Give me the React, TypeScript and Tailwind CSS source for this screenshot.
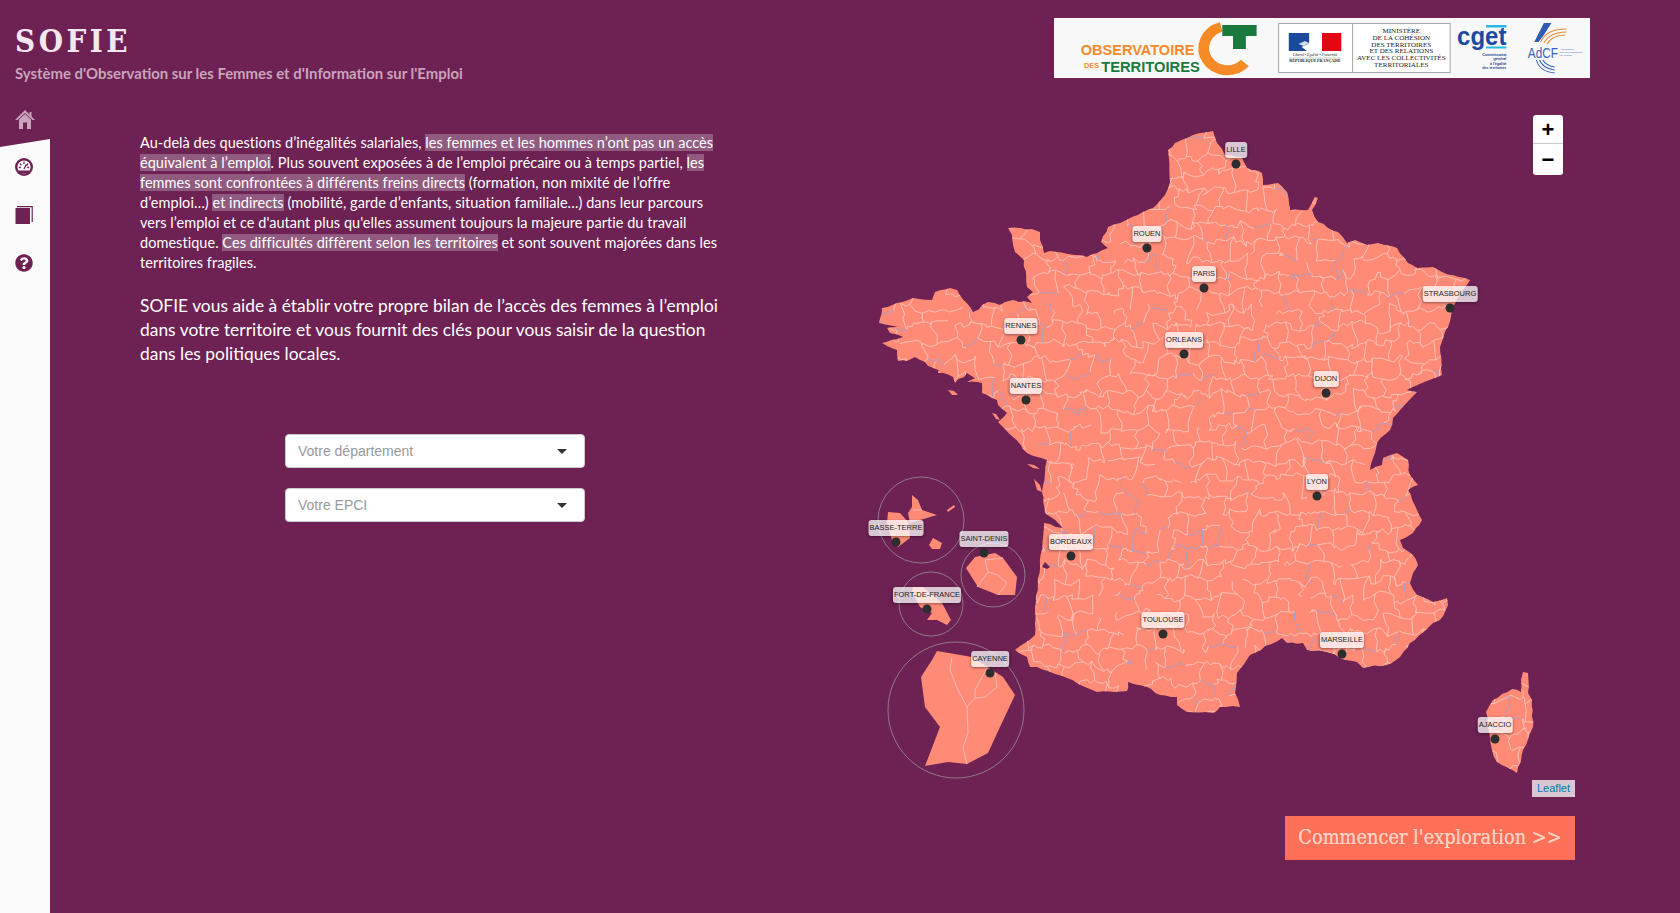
import { FaQuestionCircle } from "react-icons/fa";

const franceCoast =
  "1213,131 1193,135 1175,143 1168,150 1170,182 1165,195 1153,208 1132,217 1108,227 1101,242 1108,248 1087,257 1068,254 1050,251 1044,253 1040,240 1040,232 1032,229 1008,228 1012,235 1015,252 1024,260 1027,287 1033,292 1027,297 1032,303 1013,300 1005,302 1000,305 988,302 973,312 957,290 950,288 935,292 932,300 913,298 897,303 882,308 879,323 898,327 887,328 890,333 903,337 882,343 897,350 898,361 907,361 915,357 933,368 953,377 955,383 967,373 975,378 967,382 982,383 982,393 997,400 998,405 1007,413 998,422 1013,437 1027,453 1047,460 1042,492 1045,513 1063,528 1050,524 1044,523 1040,567 1035,607 1035,635 1015,650 1027,657 1030,667 1037,667 1067,678 1097,692 1127,691 1128,682 1147,687 1160,695 1177,697 1177,705 1187,712 1213,713 1220,707 1240,707 1235,693 1237,673 1250,655 1282,638 1287,643 1303,643 1307,650 1327,652 1340,658 1357,662 1363,668 1387,665 1400,657 1410,643 1433,623 1440,620 1448,605 1447,598 1433,602 1417,595 1410,583 1413,573 1418,565 1413,555 1403,548 1400,540 1413,533 1422,520 1417,510 1408,490 1418,485 1410,475 1408,460 1397,453 1383,458 1382,465 1370,470 1375,453 1377,443 1390,430 1393,418 1417,392 1407,390 1442,375 1440,347 1448,327 1452,308 1470,280 1442,272 1433,267 1417,268 1408,263 1397,248 1378,243 1367,245 1355,240 1347,243 1338,232 1318,222 1312,210 1318,198 1315,197 1308,210 1290,210 1287,192 1278,183 1263,185 1262,173 1247,168 1242,157 1225,155 1217,143";
const corsicaCoast =
  "1523,672 1528,673 1528,693 1532,700 1533,727 1523,750 1517,773 1497,762 1492,750 1490,737 1486,712 1493,700 1512,689 1521,692 1521,680";
const islands = [
  "1027,464 1034,465 1040,469 1033,468",
  "1034,479 1040,485 1042,492 1037,490",
  "948,390 954,391 958,395 952,395",
  "992,413 996,414 1000,420 996,419",
  "938,371 941,371 942,373 938,373",
];
const overseas = [
  "937,651 972,657 1003,677 1015,695 1000,727 988,753 967,764 948,762 925,766 940,727 925,707 921,677 932,660",
  "975,557 995,553 1003,558 1017,577 1015,595 998,595 978,587 966,568",
  "913,587 923,587 942,603 951,620 947,625 937,620 927,620 932,613 920,607 912,592",
  "912,495 918,500 922,510 937,515 910,523 908,513 912,507",
  "888,512 900,513 909,523 910,538 898,547 892,540 887,523",
  "933,538 942,543 940,549 932,549 929,545",
  "947,510 954,505 955,507 948,512",
];
const overseasBorders =
  "M952 657L950 670L958 690L967 707L968 733L963 747L967 764M967 707L975 698L975 690L987 668M975 698L985 697L997 687L995 673M985 560L988 572L977 587M985 560L1003 558M988 572L998 575L1007 583L998 595M913 510L922 510";

const circles = [
  { x: 921, y: 520, r: 43 },
  { x: 993, y: 575, r: 32 },
  { x: 931, y: 604, r: 32 },
  { x: 956, y: 710, r: 68 },
];

const cities = [
  { name: "LILLE", x: 1236, y: 164 },
  { name: "ROUEN", x: 1147, y: 248 },
  { name: "PARIS", x: 1204, y: 288 },
  { name: "RENNES", x: 1021, y: 340 },
  { name: "NANTES", x: 1026, y: 400 },
  { name: "ORLEANS", x: 1184, y: 354 },
  { name: "STRASBOURG", x: 1450, y: 308 },
  { name: "DIJON", x: 1326, y: 393 },
  { name: "LYON", x: 1317, y: 496 },
  { name: "MARSEILLE", x: 1342, y: 654 },
  { name: "TOULOUSE", x: 1163, y: 634 },
  { name: "BORDEAUX", x: 1071, y: 556 },
  { name: "BASSE-TERRE", x: 896, y: 542 },
  { name: "SAINT-DENIS", x: 984, y: 553 },
  { name: "FORT-DE-FRANCE", x: 927, y: 609 },
  { name: "CAYENNE", x: 990, y: 673 },
  { name: "AJACCIO", x: 1495, y: 739 },
];

let seed = 73421;
const rand = () => {
  seed = (seed * 1664525 + 1013904223) % 4294967296;
  return seed / 4294967296;
};

// break long coast segments up so the outline isn't so straight
function roughen(points: string) {
  const pts = points.split(" ").map((p) => p.split(",").map(Number));
  const out: string[] = [];
  pts.forEach((a, i) => {
    const b = pts[(i + 1) % pts.length];
    const steps = Math.max(1, Math.round(Math.hypot(b[0] - a[0], b[1] - a[1]) / 6));
    for (let s = 0; s < steps; s++) {
      const j = s === 0 ? 0 : 1.8;
      const x = a[0] + ((b[0] - a[0]) * s) / steps + (rand() - 0.5) * j;
      const y = a[1] + ((b[1] - a[1]) * s) / steps + (rand() - 0.5) * j;
      out.push(`${x.toFixed(1)},${y.toFixed(1)}`);
    }
  });
  return out.join(" ");
}
const franceOutline = roughen(franceCoast);
const corsicaOutline = roughen(corsicaCoast);

// fake EPCI borders: a jittered brick lattice, clipped to the land
function buildBorders() {
  const rows = 40;
  const cols = 62;
  const pts: [number, number][][] = [];
  for (let r = 0; r < rows; r++) {
    const row: [number, number][] = [];
    for (let c = 0; c < cols; c++) {
      row.push([870 + c * 11 + (rand() - 0.5) * 10, 122 + r * 17 + (rand() - 0.5) * 11]);
    }
    pts.push(row);
  }
  let light = "";
  let blue = "";
  const edge = (a: [number, number], b: [number, number]) => {
    if (rand() < 0.12) return;
    const p1 = [a[0] + (b[0] - a[0]) / 3 + (rand() - 0.5) * 6, a[1] + (b[1] - a[1]) / 3 + (rand() - 0.5) * 6];
    const p2 = [a[0] + ((b[0] - a[0]) * 2) / 3 + (rand() - 0.5) * 6, a[1] + ((b[1] - a[1]) * 2) / 3 + (rand() - 0.5) * 6];
    const d = `M${a[0].toFixed(1)} ${a[1].toFixed(1)}L${p1[0].toFixed(1)} ${p1[1].toFixed(1)}L${p2[0].toFixed(1)} ${p2[1].toFixed(1)}L${b[0].toFixed(1)} ${b[1].toFixed(1)}`;
    if (rand() < 0.1) blue += d;
    else light += d;
  };
  for (let r = 0; r < rows; r++) {
    for (let c = 0; c < cols; c++) {
      if (c + 1 < cols) edge(pts[r][c], pts[r][c + 1]);
      if (r + 1 < rows && (c + r) % 2 === 0) edge(pts[r][c], pts[r + 1][c]);
    }
  }
  return { light, blue };
}
const borders = buildBorders();

function LogoBanner() {
  return (
    <svg viewBox="0 0 500 60" preserveAspectRatio="none" className="block h-[60px] w-[536px] bg-[#f8f8f8]">
      <g fontFamily="'Liberation Sans', sans-serif" fontWeight="700">
        <text x="25" y="37" fontSize="15.5" fill="#f58a27" textLength="106" lengthAdjust="spacingAndGlyphs">OBSERVATOIRE</text>
        <text x="28" y="50" fontSize="8" fill="#f58a27" textLength="14" lengthAdjust="spacingAndGlyphs">DES</text>
        <text x="44" y="54" fontSize="15.5" fill="#1a7a3e" textLength="92" lengthAdjust="spacingAndGlyphs">TERRITOIRES</text>
      </g>
      <path d="M156 9A22 22 0 1 0 178 45" fill="none" stroke="#f58a27" strokeWidth="10" />
      <path d="M157 7H189V18H179V31H167V18H157Z" fill="#1a7a3e" />

      <rect x="209.5" y="5.5" width="160" height="49" fill="#fff" stroke="#aaa" />
      <path d="M278.5 5.5V54.5" stroke="#aaa" />
      <rect x="219" y="15" width="49" height="18" fill="#fff" />
      <rect x="219" y="15" width="19" height="18" fill="#1b4a9c" />
      <rect x="250" y="15" width="18" height="18" fill="#e30613" />
      <path d="M243 15L248 16L250 22L249 28L244 33H236L231 29L237 26L241 21Z" fill="#fff" />
      <path d="M228 26L234 23L238 25L233 28Z" fill="#fff" opacity="0.8" />
      <g fontFamily="'Liberation Serif', serif" textAnchor="middle" fill="#222">
        <text x="243.5" y="38" fontSize="3.6" fontStyle="italic">Liberté • Égalité • Fraternité</text>
        <text x="243.5" y="44.5" fontSize="3.8" fontWeight="700">RÉPUBLIQUE FRANÇAISE</text>
        <text x="324" y="15" fontSize="6.6">MINISTÈRE</text>
        <text x="324" y="22" fontSize="6.6">DE LA COHÉSION</text>
        <text x="324" y="28.7" fontSize="6.6">DES TERRITOIRES</text>
        <text x="324" y="35.3" fontSize="6.6">ET DES RELATIONS</text>
        <text x="324" y="42" fontSize="6.6">AVEC LES COLLECTIVITÉS</text>
        <text x="324" y="49.3" fontSize="6.6">TERRITORIALES</text>
      </g>
      <path d="M219 40H268" stroke="#999" strokeWidth="0.5" />

      <rect x="403" y="7" width="19" height="2.5" fill="#28b8e8" />
      <rect x="403" y="28.5" width="19" height="2" fill="#28b8e8" />
      <text x="376" y="27" fontFamily="'Liberation Sans', sans-serif" fontWeight="700" fontSize="25" fill="#1b4aa0" textLength="46" lengthAdjust="spacingAndGlyphs">cget</text>
      <g fontFamily="'Liberation Sans', sans-serif" fontWeight="700" fontSize="3.4" fill="#1b3d8f" textAnchor="end">
        <text x="422" y="38">Commissariat</text>
        <text x="422" y="42.5">général</text>
        <text x="422" y="47">à l'égalité</text>
        <text x="422" y="51.5">des territoires</text>
      </g>

      <path d="M457 5H464L457 17L452 24H448Z" fill="#2f5cb0" />
      <g fill="none" strokeWidth="1">
        <path d="M454 24C458 14 468 11 478 11" stroke="#ee8a3c" />
        <path d="M457 25C461 17 469 14 478 14" stroke="#ee8a3c" />
        <path d="M460 26C463 20 470 17 477 17" stroke="#ee8a3c" />
        <path d="M450 42C452 50 458 54 467 55" stroke="#3a63b8" />
        <path d="M453 42C455 48 460 51 467 52" stroke="#3a63b8" />
        <path d="M456 42C458 46 462 48 467 49" stroke="#3a63b8" />
      </g>
      <text x="442" y="40" fontFamily="'Liberation Sans', sans-serif" fontSize="14" fill="#3a63b8" textLength="28" lengthAdjust="spacingAndGlyphs">AdCF</text>
      <g fontFamily="'Liberation Sans', sans-serif" fontSize="2.5" fill="#3a63b8">
        <text x="472" y="32">Association</text>
        <text x="472" y="35">des Communautés</text>
        <text x="472" y="38">de France</text>
      </g>
    </svg>
  );
}

function FranceMap() {
  return (
    <div className="relative h-[697px] w-[720px]">
      <svg viewBox="855 100 720 697" className="block h-full w-full">
        <defs>
          <clipPath id="land">
            <polygon points={franceOutline} />
            <polygon points={corsicaOutline} />
          </clipPath>
        </defs>
        <polygon points={franceOutline} fill="#ff8b77" />
        <polygon points={corsicaOutline} fill="#ff8b77" />
        {islands.map((p) => (
          <polygon key={p} points={p} fill="#ff8b77" />
        ))}
        {overseas.map((p) => (
          <polygon key={p} points={p} fill="#ff8b77" />
        ))}
        <g clipPath="url(#land)" fill="none">
          <path d={borders.light} stroke="#fdc0b4" strokeWidth="1" />
          <path d={borders.blue} stroke="#ab9cc6" strokeWidth="1" />
        </g>
        {/* bassin d'Arcachon */}
        <polygon points="1042,567 1045,562 1050,567 1047,569" fill="#6e2153" />
        <path d={overseasBorders} fill="none" stroke="#f3b8b4" strokeWidth="1" />
        {circles.map((c) => (
          <circle key={c.x} cx={c.x} cy={c.y} r={c.r} fill="none" stroke="#8f7b88" strokeWidth="1" />
        ))}
        {cities.map((c) => (
          <circle key={c.name} cx={c.x} cy={c.y} r="4.5" fill="#2e2e2e" />
        ))}
      </svg>

      {cities.map((c) => (
        <div
          key={c.name}
          className="absolute -translate-x-1/2 rounded-[3px] bg-white/75 px-px font-['Liberation_Sans',sans-serif] text-[7.5px] leading-[16px] whitespace-nowrap text-[#222] shadow-[0_1px_3px_rgba(0,0,0,0.4)]"
          style={{ left: c.x - 855, top: c.y - 100 - 22 }}
        >
          {c.name}
        </div>
      ))}

      {/* zoom control */}
      <div className="absolute top-[15px] right-[12px] flex w-[30px] flex-col rounded-[3px] bg-white font-['Liberation_Sans',sans-serif] text-[22px] font-bold text-black">
        <div className="flex h-[29px] items-center justify-center border-b border-[#ccc]">+</div>
        <div className="flex h-[31px] items-center justify-center">−</div>
      </div>

      <div className="absolute right-0 bottom-0 flex h-[17px] w-[43px] items-center justify-center bg-white/75 font-['Liberation_Sans',sans-serif] text-[11px] text-[#0078a8]">
        Leaflet
      </div>
    </div>
  );
}

function Highlight({ children }: { children: string }) {
  return <span className="bg-[#905b7e] [box-decoration-break:clone]">{children}</span>;
}

function Select({ label }: { label: string }) {
  return (
    <div className="flex h-[34px] w-[300px] items-center justify-between rounded-[4px] border border-[#ccc] bg-white pr-[17px] pl-[12px] font-['Liberation_Sans',sans-serif] text-[14px] text-[#999]">
      {label}
      <span className="h-0 w-0 border-x-[5px] border-t-[5px] border-x-transparent border-t-[#333]" />
    </div>
  );
}

export default function App() {
  return (
    <div className="flex h-screen flex-col overflow-hidden bg-[#6e2153] font-['Lato',sans-serif]">
      {/* Header */}
      <header className="flex h-[100px] shrink-0 justify-between">
        <div className="pt-[21px] pl-[15px]">
          <h1 className="font-['DejaVu_Serif_Condensed','DejaVu_Serif',serif] text-[31px] leading-[40px] font-bold tracking-[3.5px] text-[#f3e8f0]">SOFIE</h1>
          <p className="mt-[2px] text-[14.9px] leading-[20px] font-bold text-[#c9a4bd]">
            Système d'Observation sur les Femmes et d'Information sur l'Emploi
          </p>
        </div>
        <div className="mt-[18px] mr-[90px]">
          <LogoBanner />
        </div>
      </header>

      <div className="flex flex-1">
        {/* Sidebar */}
        <nav className="flex w-[50px] shrink-0 flex-col">
          <div className="flex h-[39px] items-center justify-center">
            <svg viewBox="0 0 20 19" className="h-[19px] w-[20px]" fill="#c9a4bd">
              <path d="M10 0L20 10H17.5L10 3L2.5 10H0Z" />
              <path d="M4 9.5L10 4L16 9.5V19H12V12.5H8V19H4Z" />
              <rect x="14.5" y="2" width="2" height="5" />
            </svg>
          </div>
          <div className="flex flex-1 flex-col bg-[#fafafa] pt-[4px] [clip-path:polygon(0_8px,100%_0,100%_100%,0_100%)]">
            <div className="flex h-[48px] items-center justify-center pr-[2px]">
              <svg viewBox="0 0 18 18" className="h-[18px] w-[18px]">
                <circle cx="9" cy="9" r="9" fill="#6e2153" />
                <circle cx="9" cy="9" r="6.6" fill="#fff" />
                <path d="M3 12.5H15L13 15.5H5Z" fill="#6e2153" />
                <path d="M9 3.5V6M5 5.5L6.3 7.3M13 5.5L11.7 7.3M9 11L11.3 6.5M3.8 9.5H5.8M12.2 9.5H14.2" stroke="#6e2153" strokeWidth="1.3" fill="none" />
              </svg>
            </div>
            <div className="flex h-[48px] items-center justify-center pr-[2px]">
              <svg viewBox="0 0 18 18" className="h-[18px] w-[18px]">
                <rect x="0.5" y="2" width="14.5" height="16" fill="#6e2153" />
                <path d="M2 0.7H17.2V16" fill="none" stroke="#6e2153" strokeWidth="1.2" />
              </svg>
            </div>
            <div className="flex h-[48px] items-center justify-center pr-[2px]">
              <FaQuestionCircle className="h-[18px] w-[18px] text-[#6e2153]" />
            </div>
          </div>
        </nav>

        {/* Intro */}
        <main className="ml-[90px] w-[600px] pt-[33px] text-white">
          <p className="text-[14.5px] leading-[20px] tracking-[0.04px] whitespace-nowrap">
            Au-delà des questions d’inégalités salariales, <Highlight>les femmes et les hommes n’ont pas un accès</Highlight>
            <br />
            <Highlight>équivalent à l’emploi</Highlight>. Plus souvent exposées à de l’emploi précaire ou à temps partiel, <Highlight>les</Highlight>
            <br />
            <Highlight>femmes sont confrontées à différents freins directs</Highlight> (formation, non mixité de l’offre
            <br />
            d’emploi…) <Highlight>et indirects</Highlight> (mobilité, garde d’enfants, situation familiale…) dans leur parcours
            <br />
            vers l’emploi et ce d'autant plus qu'elles assument toujours la majeure partie du travail
            <br />
            domestique. <Highlight>Ces difficultés diffèrent selon les territoires</Highlight> et sont souvent majorées dans les
            <br />
            territoires fragiles.
          </p>
          <p className="mt-[21px] text-[17.4px] leading-[24px] whitespace-nowrap">
            SOFIE vous aide à établir votre propre bilan de l’accès des femmes à l’emploi
            <br />
            dans votre territoire et vous fournit des clés pour vous saisir de la question
            <br />
            dans les politiques locales.
          </p>
          <div className="mt-[68px] ml-[145px] flex flex-col gap-[20px]">
            <Select label="Votre département" />
            <Select label="Votre EPCI" />
          </div>
        </main>

        {/* Map */}
        <section className="mr-[105px] ml-auto flex flex-col items-end">
          <FranceMap />
          <button className="mt-[19px] flex h-[44px] w-[290px] items-center justify-center bg-[#ff7058] font-['DejaVu_Serif_Condensed','Liberation_Serif',serif] text-[19.8px] whitespace-nowrap text-[#ffd0c2] [text-shadow:0_0_0.6px_#ffd0c2]">
            Commencer l'exploration &gt;&gt;
          </button>
        </section>
      </div>
    </div>
  );
}
